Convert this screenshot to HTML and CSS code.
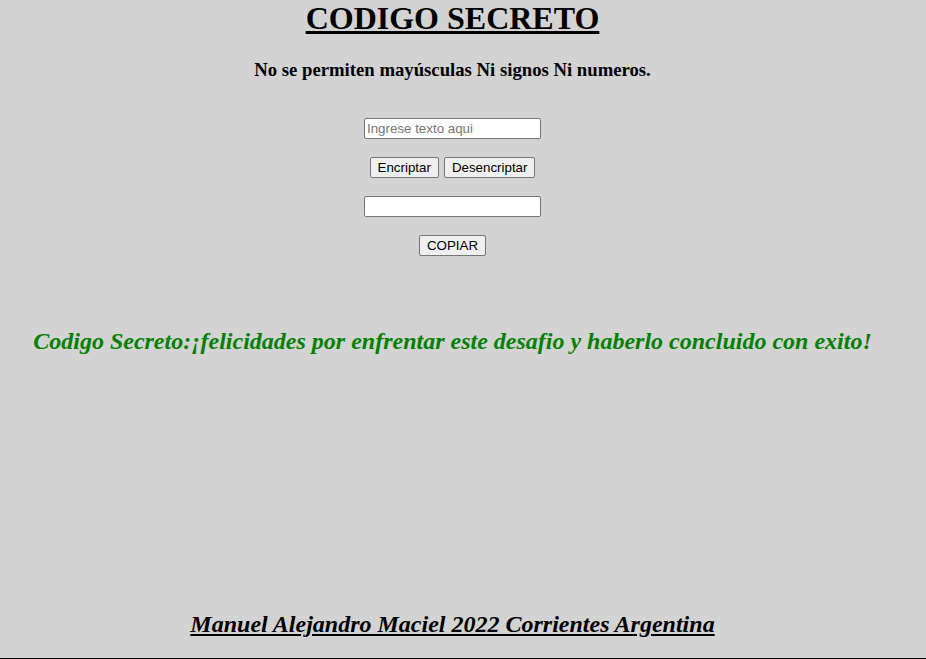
FILE: index.html
```html
<!DOCTYPE html>
<html lang="es">
<head>
<meta charset="utf-8">
<title>Codigo Secreto</title>
<link rel="stylesheet" href="styles.css">
</head>
<body>
<div class="page">
  <h1 class="title">CODIGO SECRETO</h1>
  <h3 class="subtitle">No se permiten mayúsculas Ni signos Ni numeros.</h3>
  <div class="controls">
    <input class="field" type="text" placeholder="Ingrese texto aqui">
    <div class="buttons">
      <button class="btn" type="button">Encriptar</button>
      <button class="btn" type="button">Desencriptar</button>
    </div>
    <input class="field" type="text">
    <button class="btn" type="button">COPIAR</button>
  </div>
  <h2 class="message">Codigo Secreto:¡felicidades por enfrentar este desafio y haberlo concluido con exito!</h2>
  <footer class="footer">Manuel Alejandro Maciel 2022 Corrientes Argentina</footer>
</div>
</body>
</html>
```
FILE: styles.css
```css
html, body {
  margin: 0;
  padding: 0;
  background: #d3d3d3;
}
body {
  font-family: "Liberation Serif", "Times New Roman", serif;
  color: #000;
}
.page {
  width: 926px;
  height: 659px;
  box-sizing: border-box;
  padding-right: 21px;
  border-bottom: 1px solid #000;
  display: flex;
  flex-direction: column;
  align-items: center;
  text-align: center;
}
.title {
  margin: 0;
  font-size: 32px;
  font-weight: bold;
  text-decoration: underline;
  line-height: 37px;
}
.subtitle {
  margin: 22px 0 0;
  font-size: 18.72px;
  font-weight: bold;
  line-height: 21px;
}
.controls {
  margin-top: 38px;
  display: flex;
  flex-direction: column;
  align-items: center;
  gap: 18px;
}
.buttons {
  display: flex;
  gap: 5px;
}
.field {
  width: 177px;
  height: 21px;
  box-sizing: border-box;
  margin: 0;
  padding: 1px 2px;
  border: 1px solid #767676;
  border-radius: 2px;
  background: #fff;
  font-family: "Liberation Sans", Arial, sans-serif;
  font-size: 13.33px;
  color: #000;
}
.field::placeholder {
  color: #757575;
}
.btn {
  height: 21px;
  box-sizing: border-box;
  margin: 0;
  padding: 1px 7px;
  border: 1px solid #767676;
  border-radius: 2px;
  background: #efefef;
  font-family: "Liberation Sans", Arial, sans-serif;
  font-size: 13.33px;
  color: #000;
}
.message {
  margin: 71px 0 0;
  font-size: 24px;
  font-style: italic;
  font-weight: bold;
  color: #008000;
  line-height: 28px;
}
.footer {
  margin-top: auto;
  margin-bottom: 20px;
  font-size: 24px;
  font-style: italic;
  font-weight: bold;
  text-decoration: underline;
  line-height: 28px;
}
```
